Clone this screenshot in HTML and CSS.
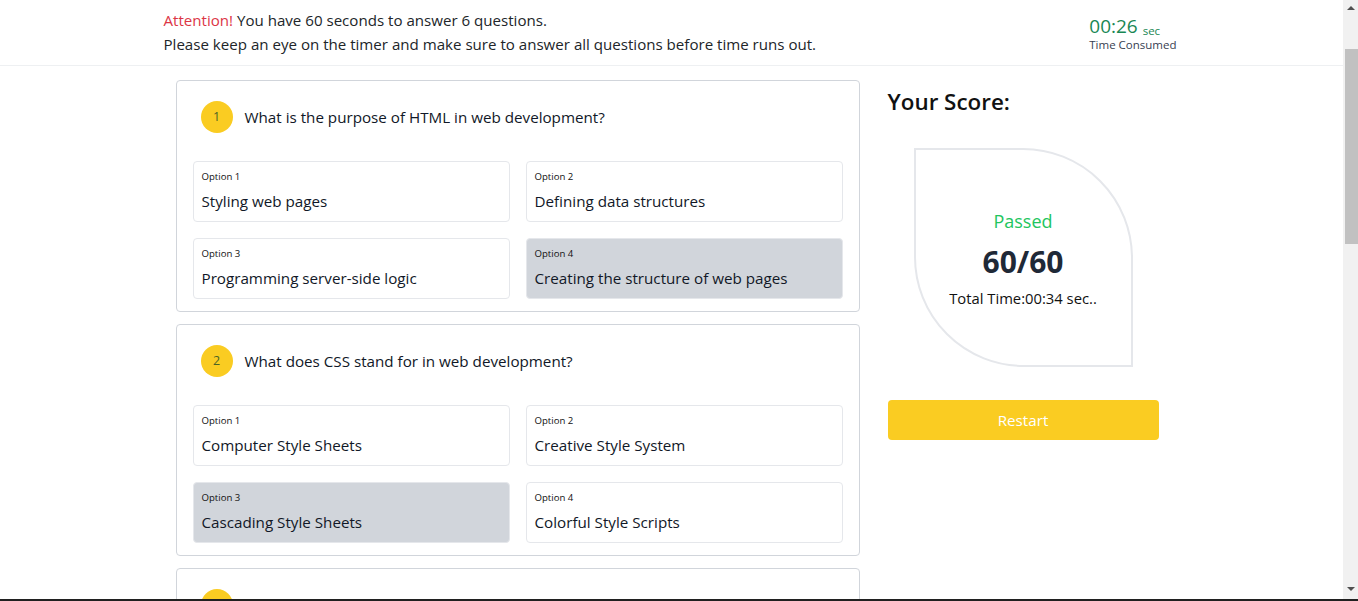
FILE: index.html
```html
<!DOCTYPE html>
<html lang="en">
<head>
<meta charset="utf-8">
<title>Quiz</title>
<link rel="stylesheet" href="styles.css">
</head>
<body>
<div class="page">
<header class="topbar">
  <div class="container topbar-inner">
    <div class="notice">
      <p><span class="attn">Attention!</span> You have 60 seconds to answer 6 questions.</p>
      <p>Please keep an eye on the timer and make sure to answer all questions before time runs out.</p>
    </div>
    <div class="timer">
      <div class="timer-value">00:26 <span class="timer-unit">sec</span></div>
      <div class="timer-label">Time Consumed</div>
    </div>
  </div>
</header>
<main class="container main">
  <section class="questions">
    <div class="card">
      <div class="q-head"><span class="q-num">1</span><span class="q-text">What is the purpose of HTML in web development?</span></div>
      <div class="options">
        <div class="option"><div class="opt-label">Option 1</div><div class="opt-text">Styling web pages</div></div>
        <div class="option"><div class="opt-label">Option 2</div><div class="opt-text">Defining data structures</div></div>
        <div class="option"><div class="opt-label">Option 3</div><div class="opt-text">Programming server-side logic</div></div>
        <div class="option selected"><div class="opt-label">Option 4</div><div class="opt-text">Creating the structure of web pages</div></div>
      </div>
    </div>
    <div class="card">
      <div class="q-head"><span class="q-num">2</span><span class="q-text">What does CSS stand for in web development?</span></div>
      <div class="options">
        <div class="option"><div class="opt-label">Option 1</div><div class="opt-text">Computer Style Sheets</div></div>
        <div class="option"><div class="opt-label">Option 2</div><div class="opt-text">Creative Style System</div></div>
        <div class="option selected"><div class="opt-label">Option 3</div><div class="opt-text">Cascading Style Sheets</div></div>
        <div class="option"><div class="opt-label">Option 4</div><div class="opt-text">Colorful Style Scripts</div></div>
      </div>
    </div>
    <div class="card">
      <div class="q-head"><span class="q-num">3</span><span class="q-text">Which language is used to add interactivity to web pages?</span></div>
      <div class="options">
        <div class="option"><div class="opt-label">Option 1</div><div class="opt-text">Python</div></div>
        <div class="option selected"><div class="opt-label">Option 2</div><div class="opt-text">JavaScript</div></div>
        <div class="option"><div class="opt-label">Option 3</div><div class="opt-text">SQL</div></div>
        <div class="option"><div class="opt-label">Option 4</div><div class="opt-text">XML</div></div>
      </div>
    </div>
    <div class="card">
      <div class="q-head"><span class="q-num">4</span><span class="q-text">What does HTTP stand for?</span></div>
      <div class="options">
        <div class="option selected"><div class="opt-label">Option 1</div><div class="opt-text">HyperText Transfer Protocol</div></div>
        <div class="option"><div class="opt-label">Option 2</div><div class="opt-text">High Transfer Text Protocol</div></div>
        <div class="option"><div class="opt-label">Option 3</div><div class="opt-text">Hyperlink Text Transport Process</div></div>
        <div class="option"><div class="opt-label">Option 4</div><div class="opt-text">Home Tool Transfer Protocol</div></div>
      </div>
    </div>
    <div class="card">
      <div class="q-head"><span class="q-num">5</span><span class="q-text">Which HTML tag is used to create a hyperlink?</span></div>
      <div class="options">
        <div class="option"><div class="opt-label">Option 1</div><div class="opt-text">&lt;link&gt;</div></div>
        <div class="option"><div class="opt-label">Option 2</div><div class="opt-text">&lt;href&gt;</div></div>
        <div class="option selected"><div class="opt-label">Option 3</div><div class="opt-text">&lt;a&gt;</div></div>
        <div class="option"><div class="opt-label">Option 4</div><div class="opt-text">&lt;url&gt;</div></div>
      </div>
    </div>
    <div class="card">
      <div class="q-head"><span class="q-num">6</span><span class="q-text">Which CSS property changes the text color?</span></div>
      <div class="options">
        <div class="option"><div class="opt-label">Option 1</div><div class="opt-text">font-color</div></div>
        <div class="option selected"><div class="opt-label">Option 2</div><div class="opt-text">color</div></div>
        <div class="option"><div class="opt-label">Option 3</div><div class="opt-text">text-color</div></div>
        <div class="option"><div class="opt-label">Option 4</div><div class="opt-text">foreground</div></div>
      </div>
    </div>
  </section>
  <aside class="score">
    <h2 class="score-title">Your Score:</h2>
    <div class="leaf">
      <div class="leaf-status">Passed</div>
      <div class="leaf-points">60/60</div>
      <div class="leaf-time">Total Time:00:34 sec..</div>
    </div>
    <button class="restart" type="button">Restart</button>
  </aside>
</main>
</div>
<div class="fake-scrollbar" aria-hidden="true">
  <span class="sb-arrow sb-up"></span>
  <span class="sb-thumb"></span>
  <span class="sb-arrow sb-down"></span>
</div>
<div class="bottom-edge"></div>
</body>
</html>
```
FILE: styles.css
```css
* { box-sizing: border-box; }
html, body { margin: 0; padding: 0; }
html { overflow: hidden; }
body {
  font-family: "Segoe UI", "Open Sans", "Noto Sans", sans-serif;
  color: #212529;
  font-size: 15.2px;
  line-height: 1.5;
  background: #fff;
}
.page { margin-right: 15px; }
p { margin: 0; }
.container {
  max-width: 1040px;
  margin: 0 auto;
  padding: 0 12px;
}
.topbar {
  border-bottom: 1px solid #eef0f2;
  height: 66px;
}
.topbar-inner {
  display: flex;
  justify-content: space-between;
  align-items: flex-start;
  padding-top: 8px;
}
.notice { font-size: 15.1px; line-height: 24px; color: #212529; }
.attn { color: #dc3545; }
.timer {
  padding-top: 6px;
  padding-right: 3px;
  white-space: nowrap;
}
.timer-value {
  color: #198754;
  font-size: 19px;
  line-height: 24px;
}
.timer-unit { font-size: 11.5px; line-height: 1; vertical-align: -2px; }
.timer-label {
  font-size: 11.5px;
  line-height: 14px;
  margin-top: 0;
  color: #374151;
}
.main {
  display: flex;
  align-items: flex-start;
  gap: 28px;
  padding-top: 14px;
}
.questions {
  width: 684px;
  margin-left: 12px;
  display: flex;
  flex-direction: column;
  gap: 12px;
}
.card {
  border: 1px solid #d1d5db;
  border-radius: 4px;
  padding: 20px 16px 12px;
}
.q-head {
  display: flex;
  align-items: center;
  gap: 12px;
  padding-left: 8px;
  margin-bottom: 28px;
}
.q-num {
  width: 32px;
  height: 32px;
  border-radius: 50%;
  background: #facc22;
  color: #4a6326;
  font-size: 12.5px;
  display: flex;
  align-items: center;
  justify-content: center;
}
.q-text { color: #111827; line-height: 24px; }
.options {
  display: grid;
  grid-template-columns: 1fr 1fr;
  gap: 16px;
}
.option {
  border: 1px solid #e5e7eb;
  border-radius: 4px;
  padding: 7px 8px 8px;
}
.option.selected { background: #d1d5db; }
.opt-label { font-size: 9.6px; line-height: 16px; color: #111; }
.opt-text { font-size: 15.2px; line-height: 24px; margin-top: 4px; color: #111827; }
.score { width: 271px; }
.score-title {
  font-size: 22.4px;
  font-weight: 600;
  line-height: 30px;
  margin: 7px 0 31px;
  color: #111;
}
.leaf {
  width: 219px;
  height: 219px;
  margin: 0 auto;
  border: 2px solid #e5e7eb;
  border-radius: 0 110px 0 110px;
  display: flex;
  flex-direction: column;
  align-items: center;
  justify-content: center;
  padding-top: 3px;
}
.leaf-status { color: #22c55e; font-size: 18px; line-height: 24px; }
.leaf-points { font-size: 30px; font-weight: 700; line-height: 40px; margin-top: 9px; color: #1f2937; }
.leaf-time { font-size: 14.8px; line-height: 22px; margin-top: 5px; color: #111; }
.restart {
  display: block;
  width: 100%;
  height: 40px;
  margin-top: 33px;
  border: 0;
  border-radius: 4px;
  background: #facc22;
  color: #fff;
  font-family: inherit;
  font-size: 15.2px;
}
.fake-scrollbar {
  position: fixed;
  top: 0;
  right: 0;
  bottom: 0;
  width: 15px;
  background: #f1f1f1;
}
.sb-thumb {
  position: absolute;
  left: 2px;
  right: 0;
  top: 49px;
  height: 195px;
  background: #c1c1c1;
}
.sb-arrow {
  position: absolute;
  left: 4px;
  width: 0;
  height: 0;
  border-left: 4px solid transparent;
  border-right: 4px solid transparent;
}
.sb-up { top: 6px; border-bottom: 4px solid #505050; }
.sb-down { top: 587px; border-top: 4px solid #505050; }
.bottom-edge {
  position: fixed;
  left: 0;
  right: 0;
  bottom: 0;
  height: 2px;
  background: #202020;
}
```
